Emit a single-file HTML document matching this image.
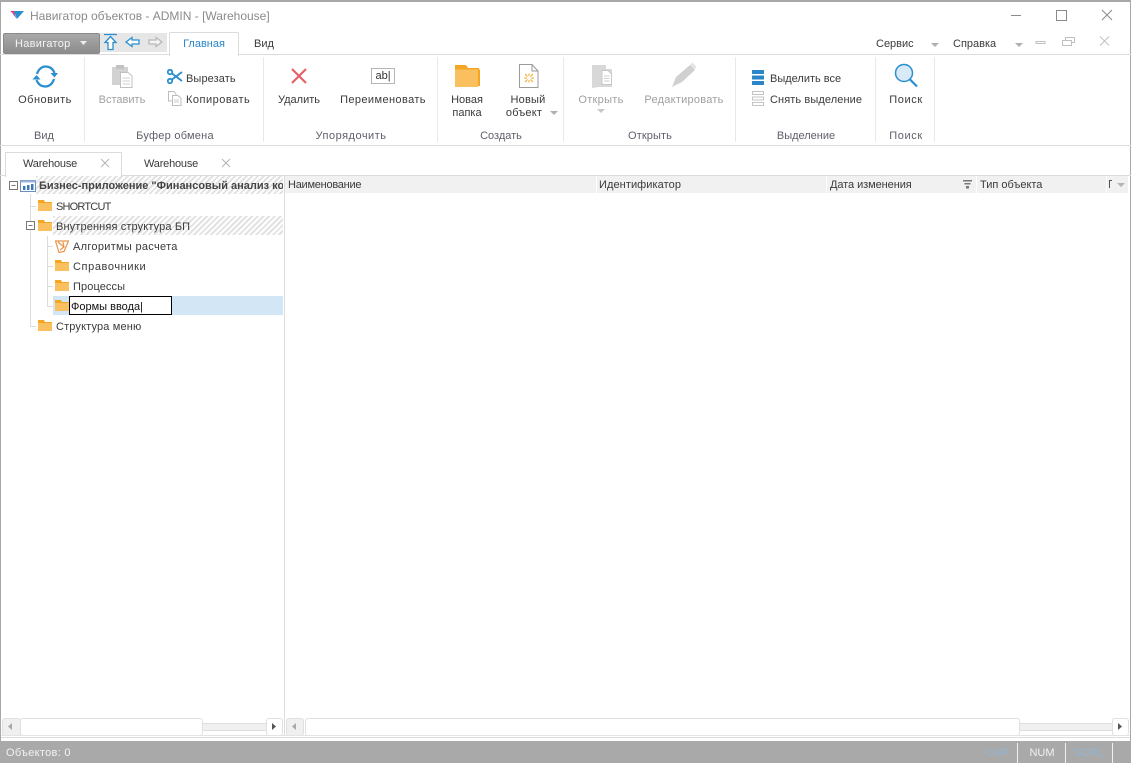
<!DOCTYPE html>
<html><head><meta charset="utf-8"><style>
html,body{margin:0;padding:0;background:#fff}
#w{position:relative;width:1131px;height:763px;overflow:hidden;background:#fff;font-family:"Liberation Sans",sans-serif;font-size:11px;color:#3a3a3a}
#w div,#w svg{position:absolute}
.t{white-space:nowrap;line-height:14px;height:14px;margin-top:1px}
.c{text-align:center;transform:translateX(-50%)}
.g{color:#a0a0a0}
.l{color:#5f5f6a}
.sep{width:1px;top:57px;height:85px;background:#e9e9e9}
.hatch{background:repeating-linear-gradient(135deg,#e2e2e2 0 2px,#fff 2px 4px)}
.hdr{top:176px;height:17px;background:#f1f1f1}
.dot{background:#dcdcdc}
</style></head><body><div id="w">
<!-- window border -->
<div style="left:0;top:0;width:1131px;height:2px;background:#a8a8a8"></div>
<div style="left:0;top:0;width:1px;height:763px;background:#a8a8a8"></div>
<div style="left:1130px;top:0;width:1px;height:763px;background:#a8a8a8"></div>
<!-- title -->
<svg style="left:9px;top:10px" width="16" height="11" viewBox="0 0 16 11"><path d="M1 1H9L6 5Z" fill="#e8407a"/><path d="M5 1H15L8 9Z" fill="#2a8fd0"/><path d="M3 3L8 9L6 5Z" fill="#6a4fb0"/></svg>
<div class="t" style="left:30px;top:8px;color:#8a8a8a;font-size:12px">Навигатор объектов - ADMIN - [Warehouse]</div>
<svg style="left:1005px;top:5px" width="120" height="20" viewBox="0 0 120 20" fill="none" stroke="#8a8a8a"><path d="M6 10.500H16"/><path d="M51.500 5.500H61.500V15.500H51.500Z"/><path d="M97 5L107 15M107 5L97 15"/></svg>
<!-- nav row -->
<div style="left:3px;top:33px;width:95px;height:19px;border:1px solid #8a8a8a;border-radius:2px;background:linear-gradient(#a9a9a9,#8c8c8c)"></div>
<div class="t" style="left:15px;top:36px;color:#f4f4f4;letter-spacing:.3px">Навигатор</div>
<svg style="left:80px;top:41px" width="7" height="4"><path d="M0 0H7L3.500 4Z" fill="#eee"/></svg>
<div style="left:100px;top:33px;width:67px;height:19px;background:#e6e6e6"></div>
<svg style="left:103px;top:33px" width="62" height="19" viewBox="0 0 62 19" fill="#fff" stroke="#2a8fd0" stroke-width="1.300"><path d="M1 1.500H14" fill="none"/><path d="M7.500 3.500L13 9.500H10V16.500H5V9.500H2Z"/><path d="M23 9L29 4.500V7H36V11H29V13.500Z"/><path stroke="#b8b8b8" fill="#f4f4f4" d="M59 9L53 4.500V7H46V11H53V13.500Z"/></svg>
<!-- ribbon tabs -->
<div style="left:0;top:54px;width:1131px;height:1px;background:#dcdcdc"></div>
<div style="left:169px;top:32px;width:68px;height:23px;background:#fff;border:1px solid #dcdcdc;border-bottom:none;border-radius:2px 2px 0 0"></div>
<div class="t c" style="left:204px;top:36px;color:#2a86c8">Главная</div>
<div class="t c" style="left:264px;top:36px">Вид</div>
<div class="t" style="left:876px;top:36px">Сервис</div>
<svg style="left:931px;top:43px" width="8" height="4"><path d="M0 0H8L4 4Z" fill="#b0b0b0"/></svg>
<div class="t" style="left:953px;top:36px">Справка</div>
<svg style="left:1015px;top:43px" width="8" height="4"><path d="M0 0H8L4 4Z" fill="#b0b0b0"/></svg>
<svg style="left:1034px;top:34px" width="80" height="14" viewBox="0 0 80 14" fill="none" stroke="#c0c0c0"><path d="M2 7.500H11V9.500H2Z"/><path d="M28.500 6.500H37.500V11.500H28.500ZM31.500 6V3.500H40.500V8.500H38"/><path d="M66 2.500L75 11.500M75 2.500L66 11.500"/></svg>
<div class="sep" style="left:84px"></div><div class="sep" style="left:263px"></div><div class="sep" style="left:437px"></div><div class="sep" style="left:563px"></div><div class="sep" style="left:735px"></div><div class="sep" style="left:875px"></div><div class="sep" style="left:934px"></div>
<div style="left:0;top:145px;width:1131px;height:1px;background:#dcdcdc"></div>
<!-- refresh -->
<svg style="left:32px;top:64px" width="27" height="25" viewBox="0 0 27 25" fill="none" stroke="#2a8fd0" stroke-width="2.200"><path d="M5 10C6.500 5 10 2.500 13.500 2.500C18 2.500 21 5 22.500 9"/><path d="M22 15C20.500 20 17 22.500 13.500 22.500C9 22.500 6 20 4.500 16"/><path d="M18.500 9H26L22.500 13.500Z" fill="#2a8fd0" stroke="none"/><path d="M0.500 15.500H8.500L4.500 11Z" fill="#2a8fd0" stroke="none"/></svg>
<div class="t c" style="left:45px;top:92px;letter-spacing:.5px">Обновить</div>
<div class="t c l" style="left:44px;top:128px">Вид</div>
<!-- paste -->
<svg style="left:111px;top:65px" width="22" height="23" viewBox="0 0 22 23"><rect x="1" y="2" width="16" height="18" fill="#d2d2d2"/><rect x="5" y="0" width="8" height="4" fill="#c2c2c2"/><path d="M9.500 7.500H17L21 11V22.500H9.500Z" fill="#fff" stroke="#c0c0c0"/><path d="M11.500 13H19M11.500 16H19M11.500 19H19" stroke="#cfcfcf"/></svg>
<div class="t c g" style="left:122px;top:92px">Вставить</div>
<svg style="left:167px;top:69px" width="16" height="15" viewBox="0 0 16 15" fill="none" stroke="#2a8fd0" stroke-width="1.800"><circle cx="3" cy="3" r="2.200"/><circle cx="3" cy="12" r="2.200"/><path d="M5 4.500L15 12M5 10.500L15 3"/></svg>
<div class="t" style="left:186px;top:71px;letter-spacing:.1px">Вырезать</div>
<svg style="left:167px;top:91px" width="15" height="15" viewBox="0 0 15 15" fill="#fff" stroke="#bdbdbd"><path d="M1.500 .5H7L9 3V10H1.500Z"/><path d="M5.500 4.500H11L14 7.500V14.500H5.500Z"/><path d="M7 9H12M7 11H12" stroke="#cfcfcf"/></svg>
<div class="t" style="left:186px;top:92px;letter-spacing:.5px">Копировать</div>
<div class="t c l" style="left:175px;top:128px;letter-spacing:.25px">Буфер обмена</div>
<!-- delete / rename -->
<svg style="left:290px;top:67px" width="18" height="18" viewBox="0 0 18 18" stroke="#e4606c" stroke-width="2.200"><path d="M2 2L16 16M16 2L2 16"/></svg>
<div class="t c" style="left:299px;top:92px">Удалить</div>
<div style="left:371px;top:68px;width:22px;height:14px;border:1px solid #b5b5b5;background:#fff"></div>
<div class="t c" style="left:383px;top:68px;color:#333;font-size:11px">ab|</div>
<div class="t c" style="left:383px;top:92px;letter-spacing:.4px">Переименовать</div>
<div class="t c l" style="left:351px;top:128px;letter-spacing:.5px">Упорядочить</div>
<!-- create -->
<svg style="left:455px;top:65px" width="25" height="22" viewBox="0 0 25 22"><path d="M0 0H11L13 3H24V21H0Z" fill="#f5a623"/><path d="M0 4.500H23V22H0Z" fill="#fac060"/><path d="M23 4.500H25V21H23Z" fill="#f5a623"/></svg>
<div class="t c" style="left:467px;top:92px">Новая</div>
<div class="t c" style="left:467px;top:105px">папка</div>
<svg style="left:519px;top:64px" width="20" height="24" viewBox="0 0 20 24" fill="none"><path d="M.5.500H13L19 7V23.500H.5Z" fill="#fff" stroke="#9a9a9a"/><path d="M13 .5V7H19" stroke="#9a9a9a"/><path d="M6 10L8.500 12.500M14 10L11.500 12.500M6 18L8.500 15.500M14 18L11.500 15.500M5 14H8M12 14H15M10 9.500V12M10 16V18.500" stroke="#f5a623"/></svg>
<div class="t c" style="left:528px;top:92px;letter-spacing:.2px">Новый</div>
<div class="t c" style="left:524px;top:105px;letter-spacing:.2px">объект</div>
<svg style="left:550px;top:111px" width="8" height="4"><path d="M0 0H8L4 4Z" fill="#b0b0b0"/></svg>
<div class="t c l" style="left:501px;top:128px">Создать</div>
<!-- open / edit -->
<svg style="left:591px;top:64px" width="22" height="25" viewBox="0 0 22 25"><path d="M1 1H15V5H21V23H8L1 24Z" fill="#d8d8d8"/><path d="M11 6.500H17L20.500 10V20.500H11Z" fill="#fff" stroke="#c8c8c8"/><path d="M13 12H18.500M13 14.500H18.500M13 17H18.500" stroke="#cfcfcf"/></svg>
<div class="t c g" style="left:601px;top:92px;letter-spacing:.3px">Открыть</div>
<svg style="left:597px;top:109px" width="8" height="4"><path d="M0 0H8L4 4Z" fill="#c8c8c8"/></svg>
<svg style="left:672px;top:62px" width="25" height="26" viewBox="0 0 25 26"><path d="M0 25L4 15L18 3L23 8L10 20Z" fill="#d0d0d0"/><path d="M18 3L20.500 .5L24.500 5L22.500 7.500Z" fill="#e4e4e4"/></svg>
<div class="t c g" style="left:684px;top:92px;letter-spacing:.25px">Редактировать</div>
<div class="t c l" style="left:650px;top:128px;letter-spacing:.1px">Открыть</div>
<!-- select -->
<svg style="left:752px;top:70px" width="13" height="15" viewBox="0 0 13 15" fill="#2a86c8"><rect width="12" height="4" rx=".5"/><rect y="5.500" width="12" height="4" rx=".5"/><rect y="11" width="12" height="4" rx=".5"/></svg>
<div class="t" style="left:770px;top:71px">Выделить все</div>
<svg style="left:752px;top:91px" width="13" height="15" viewBox="0 0 13 15" fill="none" stroke="#c4c4c4"><rect x=".5" y=".5" width="11" height="3"/><rect x=".5" y="6" width="11" height="3"/><rect x=".5" y="11.500" width="11" height="3"/></svg>
<div class="t" style="left:770px;top:92px;letter-spacing:.1px">Снять выделение</div>
<div class="t c l" style="left:806px;top:128px">Выделение</div>
<svg style="left:893px;top:63px" width="25" height="25" viewBox="0 0 25 25"><circle cx="11" cy="10" r="8.500" fill="#d8eaf6" stroke="#2a8fd0" stroke-width="1.500"/><path d="M17 16.500L24 23.500" stroke="#2a8fd0" stroke-width="2.200"/></svg>
<div class="t c" style="left:906px;top:92px;letter-spacing:.6px">Поиск</div>
<div class="t c l" style="left:906px;top:128px;letter-spacing:.6px">Поиск</div>
<!-- doc tabs -->
<div style="left:0;top:175px;width:1131px;height:1px;background:#dcdcdc"></div>
<div style="left:5px;top:152px;width:115px;height:24px;background:#fff;border:1px solid #dcdcdc;border-bottom:none"></div>
<div class="t" style="left:23px;top:156px;letter-spacing:-.2px">Warehouse</div>
<svg style="left:100px;top:158px" width="10" height="10" stroke="#b4b4b4"><path d="M1 1L9 9M9 1L1 9"/></svg>
<div class="t" style="left:144px;top:156px;letter-spacing:-.2px">Warehouse</div>
<svg style="left:221px;top:158px" width="10" height="10" stroke="#b4b4b4"><path d="M1 1L9 9M9 1L1 9"/></svg>
<!-- tree -->
<div class="hatch" style="left:36px;top:176px;width:247px;height:18px"></div>
<div class="hatch" style="left:53px;top:216px;width:230px;height:19px"></div>
<div style="left:53px;top:296px;width:230px;height:19px;background:#d3e6f5"></div>
<div class="dot" style="left:30px;top:194px;width:1px;height:133px"></div>
<div class="dot" style="left:47px;top:236px;width:1px;height:71px"></div>
<div class="dot" style="left:30px;top:206px;width:6px;height:1px"></div>
<div class="dot" style="left:30px;top:326px;width:6px;height:1px"></div>
<div class="dot" style="left:47px;top:246px;width:6px;height:1px"></div>
<div class="dot" style="left:47px;top:266px;width:6px;height:1px"></div>
<div class="dot" style="left:47px;top:286px;width:6px;height:1px"></div>
<div class="dot" style="left:47px;top:306px;width:6px;height:1px"></div>
<svg style="left:9px;top:181px" width="10" height="10" fill="#fff" stroke="#777"><path d="M.5.500H8.500V8.500H.5Z"/><path d="M2.500 4.500H6.500"/></svg>
<svg style="left:26px;top:221px" width="10" height="10" fill="#fff" stroke="#777"><path d="M.5.500H8.500V8.500H.5Z"/><path d="M2.500 4.500H6.500"/></svg>
<svg style="left:20px;top:180px" width="16" height="12" viewBox="0 0 16 12"><rect x=".5" y=".5" width="15" height="11" fill="#fff" stroke="#6c8ebf"/><rect x=".5" y=".5" width="15" height="2" fill="#9db6d8"/><rect x="3" y="6" width="2.500" height="4" fill="#3f78b8"/><rect x="7" y="5" width="2.500" height="5" fill="#3f78b8"/><rect x="11" y="4" width="2.500" height="6" fill="#3f78b8"/></svg>
<div class="t" style="left:39px;top:178px;font-weight:bold;width:244px;overflow:hidden;color:#444">Бизнес-приложение "Финансовый анализ компании"</div>
<svg width="0" height="0" style="left:0;top:0"><defs><g id="f"><path d="M0 0H6L7 2H14V11H0Z" fill="#f5a623"/><path d="M0 3H14V11H0Z" fill="#fac060"/></g></defs></svg>
<svg style="left:38px;top:200px" width="14" height="11"><use href="#f"/></svg>
<div class="t" style="left:56px;top:199px;letter-spacing:-.8px">SHORTCUT</div>
<svg style="left:38px;top:220px" width="14" height="11"><use href="#f"/></svg>
<div class="t" style="left:56px;top:219px;letter-spacing:.13px">Внутренняя структура БП</div>
<svg style="left:55px;top:240px" width="14" height="13" viewBox="0 0 14 13" fill="none" stroke="#e8944a" stroke-width="1.200"><path d="M.5 1H13.500L9 11.500L4 12.500Z"/><path d="M3 2L9 7L5 10M8 2L9 7"/></svg>
<div class="t" style="left:73px;top:239px;letter-spacing:.3px">Алгоритмы расчета</div>
<svg style="left:55px;top:260px" width="14" height="11"><use href="#f"/></svg>
<div class="t" style="left:73px;top:259px;letter-spacing:.6px">Справочники</div>
<svg style="left:55px;top:280px" width="14" height="11"><use href="#f"/></svg>
<div class="t" style="left:73px;top:279px;letter-spacing:.1px">Процессы</div>
<svg style="left:55px;top:300px" width="14" height="11"><use href="#f"/></svg>
<div style="left:69px;top:296px;width:101px;height:17px;border:1px solid #000;background:#fff"></div>
<div class="t" style="left:71px;top:299px;color:#111">Формы ввода|</div>
<svg style="left:38px;top:320px" width="14" height="11"><use href="#f"/></svg>
<div class="t" style="left:56px;top:319px;letter-spacing:.15px">Структура меню</div>
<!-- table header -->
<div style="left:284px;top:176px;width:1px;height:559px;background:#dcdcdc"></div>
<div class="hdr" style="left:285px;width:311px"></div>
<div class="hdr" style="left:597px;width:229px"></div>
<div class="hdr" style="left:827px;width:149px"></div>
<div class="hdr" style="left:977px;width:129px"></div>
<div class="hdr" style="left:1107px;width:21px"></div>
<div class="t" style="left:288px;top:177px;letter-spacing:-.25px">Наименование</div>
<div class="t" style="left:599px;top:177px;letter-spacing:.08px">Идентификатор</div>
<div class="t" style="left:830px;top:177px;letter-spacing:-.07px">Дата изменения</div>
<svg style="left:963px;top:180px" width="9" height="9" fill="#777"><path d="M0 0H9V1.500H0ZM1.500 3H7.500V4.500H1.500ZM3 6H6V8.500H3Z"/></svg>
<div class="t" style="left:980px;top:177px">Тип объекта</div>
<div style="left:1109px;top:180px;width:1px;height:8px;background:#555"></div>
<div style="left:1110px;top:180px;width:2px;height:1px;background:#555"></div>
<svg style="left:1117px;top:183px" width="8" height="4"><path d="M0 0H8L4 4Z" fill="#b4b4b4"/></svg>
<!-- scrollbars -->
<div style="left:203px;top:723px;width:63px;height:6px;background:#f0f0f0;border:1px solid #dedede;border-width:1px 0"></div>
<div style="left:1020px;top:723px;width:92px;height:6px;background:#f0f0f0;border:1px solid #dedede;border-width:1px 0"></div>
<div style="left:2px;top:718px;width:17px;height:16px;background:#f0f0f0;border:1px solid #e0e0e0;border-radius:3px"></div>
<div style="left:20px;top:718px;width:181px;height:16px;background:#fff;border:1px solid #e0e0e0;border-radius:3px"></div>
<div style="left:266px;top:718px;width:15px;height:16px;background:#fff;border:1px solid #e0e0e0;border-radius:3px"></div>
<div style="left:286px;top:718px;width:16px;height:16px;background:#f0f0f0;border:1px solid #e0e0e0;border-radius:3px"></div>
<div style="left:305px;top:718px;width:713px;height:16px;background:#fff;border:1px solid #e0e0e0;border-radius:3px"></div>
<div style="left:1112px;top:718px;width:15px;height:16px;background:#fff;border:1px solid #e0e0e0;border-radius:3px"></div>
<svg style="left:8px;top:723px" width="5" height="7"><path d="M4 0V7L0 3.500Z" fill="#a8a8a8"/></svg>
<svg style="left:272px;top:723px" width="5" height="7"><path d="M0 0V7L4 3.500Z" fill="#555"/></svg>
<svg style="left:292px;top:723px" width="5" height="7"><path d="M4 0V7L0 3.500Z" fill="#a8a8a8"/></svg>
<svg style="left:1118px;top:723px" width="5" height="7"><path d="M0 0V7L4 3.500Z" fill="#555"/></svg>
<div style="left:1px;top:735px;width:1129px;height:1px;background:#e4e4e4"></div>
<div style="left:1px;top:737px;width:1129px;height:1px;background:#dcdcdc"></div>
<!-- status -->
<div style="left:0;top:741px;width:1131px;height:22px;background:#a9a9a9"></div>
<div class="t" style="left:6px;top:745px;color:#f2f2f2;letter-spacing:.3px">Объектов: 0</div>
<div class="t c" style="left:997px;top:745px;color:#8fb6d4">CAP</div>
<div style="left:1017px;top:743px;width:1px;height:20px;background:#f0f0f0"></div>
<div class="t c" style="left:1042px;top:745px;color:#f2f2f2">NUM</div>
<div style="left:1065px;top:743px;width:1px;height:20px;background:#f0f0f0"></div>
<div class="t c" style="left:1089px;top:745px;color:#8fb6d4">SCRL</div>
<div style="left:1112px;top:743px;width:1px;height:20px;background:#f0f0f0"></div>
</div></body></html>
